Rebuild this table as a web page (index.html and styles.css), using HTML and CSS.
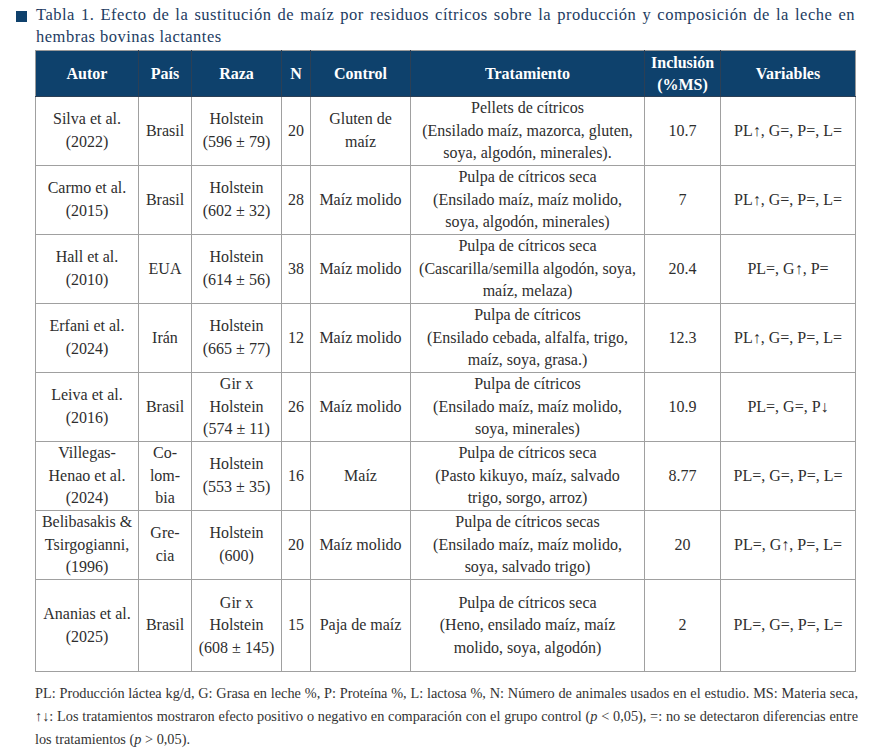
FILE: index.html
```html
<!DOCTYPE html>
<html lang="es">
<head>
<meta charset="utf-8">
<title>Tabla 1</title>
<link rel="stylesheet" href="styles.css">
</head>
<body>
<div class="page">
  <div class="caption">
    <span class="caption-mark"></span>
    <p class="caption-text">Tabla 1. Efecto de la sustitución de maíz por residuos cítricos sobre la producción y composición de la leche en hembras bovinas lactantes</p>
  </div>
  <table class="data">
    <colgroup>
      <col class="c-autor">
      <col class="c-pais">
      <col class="c-raza">
      <col class="c-n">
      <col class="c-control">
      <col class="c-trat">
      <col class="c-incl">
      <col class="c-var">
    </colgroup>
    <thead>
      <tr>
        <th>Autor</th>
        <th>País</th>
        <th>Raza</th>
        <th>N</th>
        <th>Control</th>
        <th>Tratamiento</th>
        <th>Inclusión (%MS)</th>
        <th>Variables</th>
      </tr>
    </thead>
    <tbody>
      <tr>
        <td>Silva et al. (2022)</td>
        <td>Brasil</td>
        <td>Holstein (596 ± 79)</td>
        <td>20</td>
        <td>Gluten de maíz</td>
        <td>Pellets de cítricos<br>(Ensilado maíz, mazorca, gluten, soya, algodón, minerales).</td>
        <td>10.7</td>
        <td>PL↑, G=, P=, L=</td>
      </tr>
      <tr>
        <td>Carmo et al. (2015)</td>
        <td>Brasil</td>
        <td>Holstein (602 ± 32)</td>
        <td>28</td>
        <td>Maíz molido</td>
        <td>Pulpa de cítricos seca<br>(Ensilado maíz, maíz molido, soya, algodón, minerales)</td>
        <td>7</td>
        <td>PL↑, G=, P=, L=</td>
      </tr>
      <tr>
        <td>Hall et al. (2010)</td>
        <td>EUA</td>
        <td>Holstein (614 ± 56)</td>
        <td>38</td>
        <td>Maíz molido</td>
        <td>Pulpa de cítricos seca<br>(Cascarilla/semilla algodón, soya, maíz, melaza)</td>
        <td>20.4</td>
        <td>PL=, G↑, P=</td>
      </tr>
      <tr>
        <td>Erfani et al. (2024)</td>
        <td>Irán</td>
        <td>Holstein (665 ± 77)</td>
        <td>12</td>
        <td>Maíz molido</td>
        <td>Pulpa de cítricos<br>(Ensilado cebada, alfalfa, trigo, maíz, soya, grasa.)</td>
        <td>12.3</td>
        <td>PL↑, G=, P=, L=</td>
      </tr>
      <tr>
        <td>Leiva et al. (2016)</td>
        <td>Brasil</td>
        <td>Gir x Holstein (574 ± 11)</td>
        <td>26</td>
        <td>Maíz molido</td>
        <td>Pulpa de cítricos<br>(Ensilado maíz, maíz molido, soya, minerales)</td>
        <td>10.9</td>
        <td>PL=, G=, P↓</td>
      </tr>
      <tr>
        <td>Villegas-Henao et al. (2024)</td>
        <td>Co-lom-bia</td>
        <td>Holstein (553 ± 35)</td>
        <td>16</td>
        <td>Maíz</td>
        <td>Pulpa de cítricos seca<br>(Pasto kikuyo, maíz, salvado trigo, sorgo, arroz)</td>
        <td>8.77</td>
        <td>PL=, G=, P=, L=</td>
      </tr>
      <tr>
        <td>Belibasakis &amp; Tsirgogianni, (1996)</td>
        <td>Gre-cia</td>
        <td>Holstein (600)</td>
        <td>20</td>
        <td>Maíz molido</td>
        <td>Pulpa de cítricos secas<br>(Ensilado maíz, maíz molido, soya, salvado trigo)</td>
        <td>20</td>
        <td>PL=, G↑, P=, L=</td>
      </tr>
      <tr class="row-tall">
        <td>Ananias et al. (2025)</td>
        <td>Brasil</td>
        <td>Gir x Holstein (608 ± 145)</td>
        <td>15</td>
        <td>Paja de maíz</td>
        <td>Pulpa de cítricos seca<br>(Heno, ensilado maíz, maíz molido, soya, algodón)</td>
        <td>2</td>
        <td>PL=, G=, P=, L=</td>
      </tr>
    </tbody>
  </table>
  <p class="note">PL: Producción láctea kg/d, G: Grasa en leche %, P: Proteína %, L: lactosa %, N: Número de animales usados en el estudio. MS: Materia seca, ↑↓: Los tratamientos mostraron efecto positivo o negativo en comparación con el grupo control (<i>p</i> &lt; 0,05), =: no se detectaron diferencias entre los tratamientos (<i>p</i> &gt; 0,05).</p>
</div>
</body>
</html>
```

FILE: styles.css
```css
html, body {
  margin: 0;
  padding: 0;
  background: #ffffff;
}

body {
  font-family: "Liberation Serif", "Times New Roman", serif;
  color: #2e2e2e;
}

.page {
  padding: 4px 0 0 16px;
}

.caption {
  display: flex;
  align-items: flex-start;
  gap: 9px;
  width: 839px;
}

.caption-mark {
  flex: 0 0 11px;
  height: 11px;
  margin-top: 7px;
  background: #0f416c;
}

.caption-text {
  margin: 0;
  flex: 1;
  font-size: 16.5px;
  line-height: 22px;
  letter-spacing: 0.5px;
  text-align: justify;
  color: #1d3c62;
}

.data {
  margin: 2px 0 0 19px;
  width: 820px;
  table-layout: fixed;
  border-collapse: collapse;
  font-size: 16px;
  line-height: 22.67px;
}

.c-autor { width: 103px; }
.c-pais { width: 53px; }
.c-raza { width: 90px; }
.c-n { width: 29px; }
.c-control { width: 100px; }
.c-trat { width: 234px; }
.c-incl { width: 76px; }
.c-var { width: 135px; }

.data th {
  background: #0e416c;
  color: #ffffff;
  font-weight: bold;
  height: 45px;
  padding: 0 6px;
  border: 1px solid #2b3f55;
  border-top-color: #9a9a9a;
  vertical-align: middle;
  line-height: 22px;
}

.data th:first-child { border-left-color: #9a9a9a; }
.data th:last-child { border-right-color: #9a9a9a; }

.data td {
  height: 60px;
  padding: 0 6px;
  border: 1px solid #a0a0a0;
  text-align: center;
  vertical-align: middle;
}

.data td:first-child { padding: 0 4px; }
.data td:nth-child(2) { padding: 0 3px; }
.data td:nth-child(4) { padding: 0 2px; }
.data td:nth-child(6) { padding: 0 7px; }

.data .row-tall td {
  height: 91px;
}

.note {
  margin: 10px 0 0 19px;
  width: 823px;
  font-size: 14.3px;
  line-height: 23px;
  text-align: justify;
  color: #333333;
}
```
